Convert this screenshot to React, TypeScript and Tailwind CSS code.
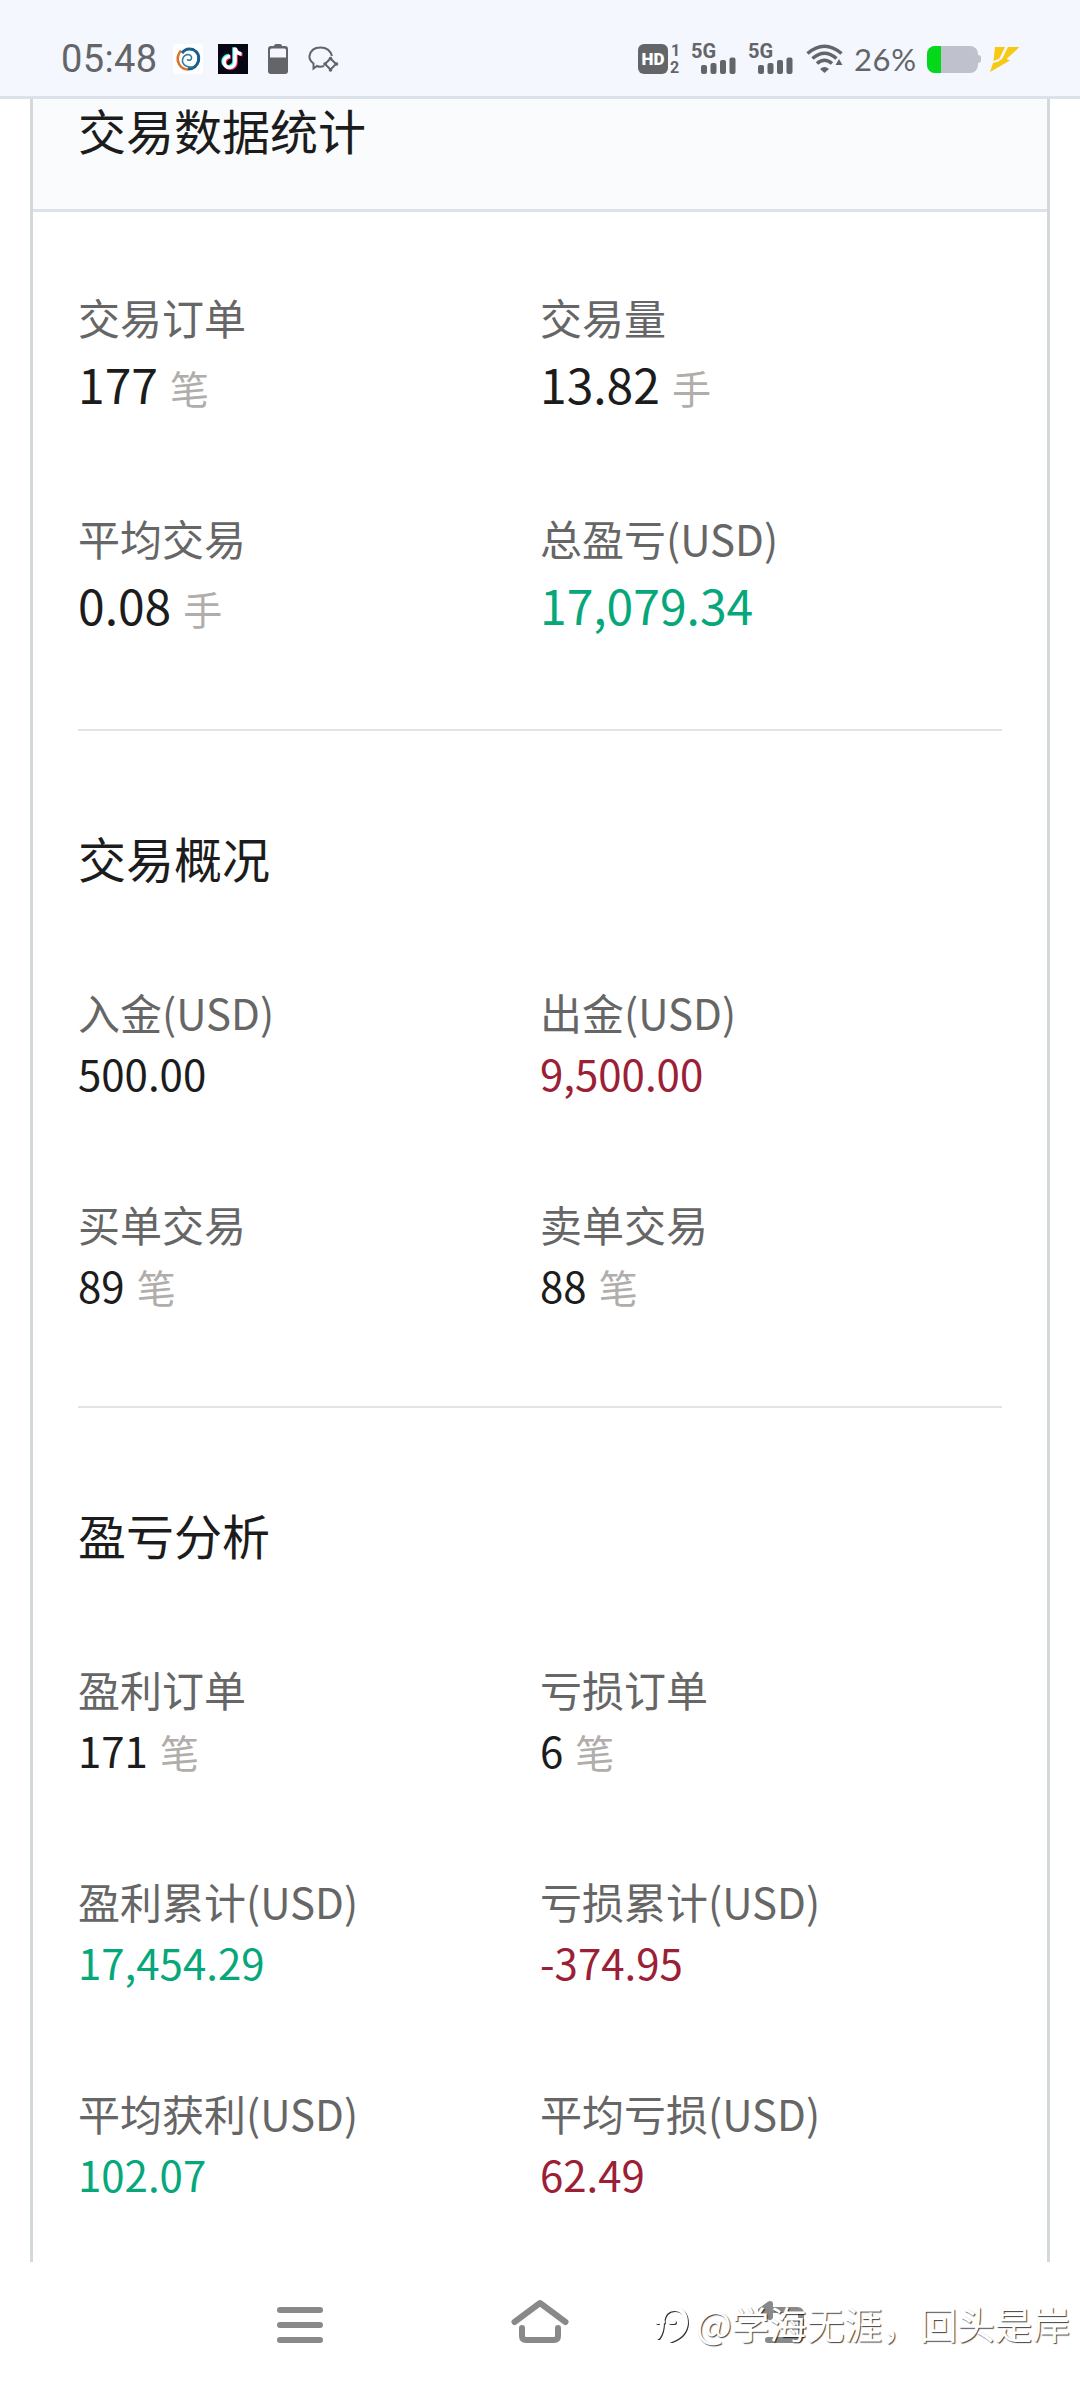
type Item = {
  label: string
  value: string
  unit?: string
  color?: string
}

const summary: Item[] = [
  { label: "交易订单", value: "177", unit: "笔" },
  { label: "交易量", value: "13.82", unit: "手" },
  { label: "平均交易", value: "0.08", unit: "手" },
  { label: "总盈亏(USD)", value: "17,079.34", color: "text-[#06a77b]" },
]

const overview: Item[] = [
  { label: "入金(USD)", value: "500.00" },
  { label: "出金(USD)", value: "9,500.00", color: "text-[#9c2035]" },
  { label: "买单交易", value: "89", unit: "笔" },
  { label: "卖单交易", value: "88", unit: "笔" },
]

const analysis: Item[] = [
  { label: "盈利订单", value: "171", unit: "笔" },
  { label: "亏损订单", value: "6", unit: "笔" },
  { label: "盈利累计(USD)", value: "17,454.29", color: "text-[#06a77b]" },
  { label: "亏损累计(USD)", value: "-374.95", color: "text-[#9c2035]" },
  { label: "平均获利(USD)", value: "102.07", color: "text-[#06a77b]" },
  { label: "平均亏损(USD)", value: "62.49", color: "text-[#9c2035]" },
]

function Signal() {
  return (
    <div className="relative w-[46px] h-10">
      <span className="absolute left-0 top-0 font-[Roboto,sans-serif] font-bold text-[20px] leading-6 text-[#636568]">5G</span>
      <svg width="46" height="32" viewBox="0 0 46 32" fill="#636568" className="mt-1">
        <rect x="10" y="22" width="6" height="9" rx="2" />
        <rect x="19.500" y="20" width="6" height="11" rx="2" />
        <rect x="29" y="17" width="6" height="14" rx="2" />
        <rect x="38.500" y="14.500" width="6" height="16.500" rx="2" />
      </svg>
    </div>
  )
}

function StatusBar() {
  return (
    <div className="h-[99px] shrink-0 bg-[#f4f7fe] border-b-[3px] border-[#dbe2e9] flex justify-between pt-[39px] pl-[61px] pr-[60px]">
      <div className="flex h-10 items-center">
        <p className="font-[Roboto,sans-serif] text-[38px] leading-10 tracking-[0.4px] text-[#636568] w-[112px]">05:48</p>
        {/* swirl */}
        <svg width="30" height="30" viewBox="0 0 30 30" className="rounded-[4px] bg-white">
          <path d="M8 6.500 Q2.500 13 6 20 Q9 25.500 15 25.500" fill="none" stroke="#d9762e" strokeWidth="2.600" />
          <path d="M9 9 Q13 3.500 20 5.500 Q27 9 25.500 17 Q23 25 15 25" fill="none" stroke="#17608f" strokeWidth="3" />
          <path d="M20 23 Q12 24 9.500 18 Q9 12 14 10.500 Q19 10.500 18.500 14.500 Q17.500 17.500 14 15.500" fill="none" stroke="#2f7f9c" strokeWidth="1.600" />
        </svg>
        <svg width="30" height="30" viewBox="0 0 30 30" className="ml-[15px] bg-[#060614]">
          <g fill="none" strokeWidth="3.600">
            <path d="M12 12.500 A5.500 5.500 0 1 0 17 18 V4 Q18 9.500 23.500 10" stroke="#25f4ee" transform="translate(-1 -.8)" />
            <path d="M12 12.500 A5.500 5.500 0 1 0 17 18 V4 Q18 9.500 23.500 10" stroke="#fe2c55" transform="translate(1 .8)" />
            <path d="M12 12.500 A5.500 5.500 0 1 0 17 18 V4 Q18 9.500 23.500 10" stroke="#fff" />
          </g>
        </svg>
        <svg width="20" height="30" viewBox="0 0 20 30" className="ml-5" fill="#636568">
          <path fillRule="evenodd" d="M6 2 Q6 0 8 0 H12 Q14 0 14 2 H17 Q20 2 20 5 V27 Q20 30 17 30 H3 Q0 30 0 27 V5 Q0 2 3 2 Z M3.500 4.500 Q2 4.500 2 6 V13.500 H18 V6 Q18 4.500 16.500 4.500 Z" />
        </svg>
        <svg width="32" height="28" viewBox="0 0 32 28" className="ml-5" fill="none" stroke="#636568" strokeWidth="2">
          <path d="M16 21 Q12 22.500 9 21 L5.500 23.500 L5.500 18.500 Q1 15 1.500 11 Q3 2.500 12.500 2.500 Q21.500 2.500 24 11" />
          <path d="M22.500 13.500 L28 19 L22.500 24.500 L17 19 Z" />
          <g fill="#636568" stroke="none">
            <circle cx="22.500" cy="13.500" r="1.800" />
            <circle cx="28.500" cy="19" r="1.800" />
            <circle cx="22.500" cy="25" r="1.800" />
            <circle cx="17" cy="19" r="1.800" />
          </g>
        </svg>
      </div>

      <div className="flex h-10 items-center font-[Roboto,sans-serif] text-[#636568]">
        <div className="w-[30px] h-[30px] rounded-[6px] bg-[#636568] text-white text-[17px] leading-[30px] font-black text-center">HD</div>
        <div className="w-[13px] h-[34px] pl-[2px] text-[16px] leading-[17px] font-bold">
          <p className="pl-px">1</p>
          <p>2</p>
        </div>
        <div className="flex gap-[11px] ml-[10px]">
          <Signal />
          <Signal />
        </div>
        <svg width="37" height="30" viewBox="0 0 37 30" className="ml-3" fill="none" stroke="#636568" strokeWidth="3.600">
          <path d="M1.500 9.500 Q18.500 -5 35.500 9.500" />
          <path d="M6.500 14.500 Q18.500 4 30.500 14.500" />
          <path d="M11 19.500 Q18.500 13 26 19.500" />
          <path d="M14 25 Q18.500 21 23 25 L18.500 29 Z" fill="#636568" stroke="none" />
          <path d="M33 15 L36.500 21 H29.500 Z" fill="#636568" stroke="none" />
        </svg>
        <p className="font-[Lato,sans-serif] text-[31px] leading-10 tracking-[0.6px] w-[84px] pl-[11px]">26%</p>
        <div className="flex items-center">
          <div className="h-[27px] w-[51px] rounded-[8px] bg-[#bfc2cc] overflow-hidden">
            <div className="h-full w-[14px] bg-[#04d81b]" />
          </div>
          <div className="h-2 w-[3px] rounded-r bg-[#bfc2cc]" />
        </div>
        <svg width="30" height="26" viewBox="0 0 30 26" className="ml-[9px]" fill="#f7c914">
          <path d="M5 1 H15 L9.500 12.500 L3.500 15 Z" />
          <path d="M18 1 H29.500 L16.500 13 L20 14.500 L0 26 L3 17 L8.500 15.500 L12 13 Z" />
        </svg>
      </div>
    </div>
  )
}

function Stat({ item, big }: { item: Item; big?: boolean }) {
  return (
    <div>
      <p className="text-[42px] leading-[60px] text-[#666666]">{item.label}</p>
      <div className={big ? "flex items-baseline h-[72px] text-[48px] leading-[72px]" : "flex items-baseline h-[62px] text-[42px] leading-[62px]"}>
        <span className={item.color || "text-[#1c1c1c]"}>{item.value}</span>
        {item.unit && <span className="ml-3 text-[39px] leading-none text-[#b0adab]">{item.unit}</span>}
      </div>
    </div>
  )
}

function Section({ title, items }: { title: string; items: Item[] }) {
  return (
    <div className="border-t-2 border-[#e2e4e5] pt-[90px] pb-[90px]">
      <h2 className="text-[48px] leading-[72px] text-[#1c1c1c]">{title}</h2>
      <div className="grid grid-cols-2 gap-y-[90px] mt-[89px]">
        {items.map((item) => (
          <Stat key={item.label} item={item} />
        ))}
      </div>
    </div>
  )
}

function NavBar() {
  return (
    <div className="relative h-[126px] shrink-0 bg-white">
      <div className="flex h-full items-center justify-between pl-[270px] pr-[270px]">
        <svg width="60" height="60" viewBox="0 0 60 60" fill="none" stroke="#898989" strokeWidth="6" strokeLinecap="round">
          <path d="M10 15 H50 M10 30 H50 M10 45 H50" />
        </svg>
        <svg width="60" height="60" viewBox="0 0 60 60" fill="none" stroke="#898989" strokeWidth="6" strokeLinecap="round" strokeLinejoin="round">
          <path d="M4.500 27 L30 8 L55.500 27" />
          <path d="M12 33 V41 Q12 45 16 45 H44 Q48 45 48 41 V33" />
        </svg>
        <svg width="60" height="60" viewBox="0 0 60 60" fill="none" stroke="#898989" strokeWidth="6" strokeLinecap="round" strokeLinejoin="round">
          <path d="M18 15 H47 Q51 15 51 19 V41 Q51 45 47 45 H18" />
          <path d="M20 9 L11 15.500 L20 22 Z" fill="#898989" />
        </svg>
      </div>
      {/* watermark over the back button */}
      <div className="absolute right-[10px] top-[33px] flex items-center text-white">
        <svg width="42" height="50" viewBox="0 0 42 50" className="drop-shadow-[1px_1px_0.5px_rgba(0,0,0,0.8)]" fill="none" stroke="#fff" strokeWidth="4" strokeLinecap="round">
          <path d="M4 39 Q8 34 8 24 Q10 11 20 11 Q32 11 32 25 Q31 37 17 42" />
          <path d="M3 24 H9 M16 24 H20" />
        </svg>
        <span className="text-[37.600px] leading-[56px] whitespace-nowrap [text-shadow:1px_1px_1px_rgba(0,0,0,0.75)]">@学海无涯，回头是岸</span>
      </div>
    </div>
  )
}

export default function App() {
  return (
    <div lang="zh-CN" className="w-[1080px] h-[2388px] overflow-hidden flex flex-col bg-white font-['Noto_Sans_CJK_SC',sans-serif]">
      <StatusBar />
      <div className="flex-1 min-h-0 overflow-hidden px-[30px]">
        <div className="border-x-[3px] border-[#d3d8db]">
          <div className="h-[113px] bg-[#fafbfd] border-b-[3px] border-[#dbe2e9] pl-[45px]">
            <h1 className="text-[48px] leading-[61px] text-[#1c1c1c]">交易数据统计</h1>
          </div>
          <div className="px-[45px]">
            <div className="grid grid-cols-2 gap-y-[89px] pt-[75px] pb-[89px]">
              {summary.map((item) => (
                <Stat key={item.label} item={item} big />
              ))}
            </div>
            <Section title="交易概况" items={overview} />
            <Section title="盈亏分析" items={analysis} />
          </div>
        </div>
      </div>
      <NavBar />
    </div>
  )
}
